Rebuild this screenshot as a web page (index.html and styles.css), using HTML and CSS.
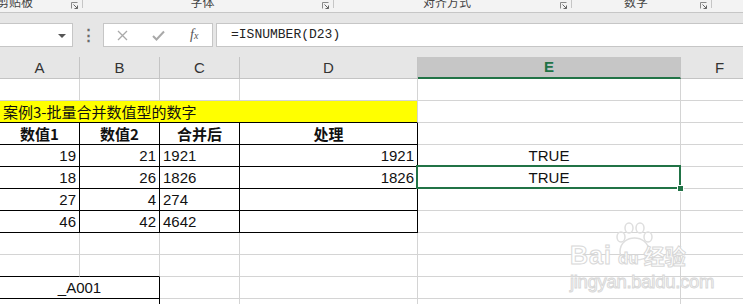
FILE: index.html
```html
<!DOCTYPE html>
<html lang="zh-CN">
<head>
  <meta charset="UTF-8">
  <title>案例3-批量合并数值型的数字</title>
  <link rel="stylesheet" href="styles.css">
</head>
<body>
  <div class="ribbon">
    <div class="group g1">
      <span class="label first">剪贴板</span>
      <svg class="launch" width="7" height="7" viewBox="0 0 7 7"><path d="M0.5 6.5V0.5H6.5" fill="none" stroke="#8a8a8a"/><path d="M2.5 2.5L6.5 6.5M6.5 3.5V6.5H3.5" fill="none" stroke="#666"/></svg>
      <span class="sep"></span>
    </div>
    <div class="group g2">
      <span class="label">字体</span>
      <svg class="launch" width="7" height="7" viewBox="0 0 7 7"><path d="M0.5 6.5V0.5H6.5" fill="none" stroke="#8a8a8a"/><path d="M2.5 2.5L6.5 6.5M6.5 3.5V6.5H3.5" fill="none" stroke="#666"/></svg>
      <span class="sep"></span>
    </div>
    <div class="group g3">
      <span class="label">对齐方式</span>
      <svg class="launch" width="7" height="7" viewBox="0 0 7 7"><path d="M0.5 6.5V0.5H6.5" fill="none" stroke="#8a8a8a"/><path d="M2.5 2.5L6.5 6.5M6.5 3.5V6.5H3.5" fill="none" stroke="#666"/></svg>
      <span class="sep"></span>
    </div>
    <div class="group g4">
      <span class="label">数字</span>
      <svg class="launch" width="7" height="7" viewBox="0 0 7 7"><path d="M0.5 6.5V0.5H6.5" fill="none" stroke="#8a8a8a"/><path d="M2.5 2.5L6.5 6.5M6.5 3.5V6.5H3.5" fill="none" stroke="#666"/></svg>
      <span class="sep"></span>
    </div>
  </div>

  <div class="formula-area">
    <div class="namebox"><span class="arrow"></span></div>
    <div class="dots">⋮</div>
    <div class="buttons">
      <span class="btn">
        <svg width="11" height="11" viewBox="0 0 11 11"><path d="M1 1L10 10M10 1L1 10" stroke="#a9a9a9" stroke-width="1.3"/></svg>
      </span>
      <span class="btn">
        <svg width="13" height="11" viewBox="0 0 13 11"><path d="M1 6L4.5 9.5L12 1.5" fill="none" stroke="#a9a9a9" stroke-width="2"/></svg>
      </span>
      <span class="btn fx">f<small>x</small></span>
    </div>
    <div class="formula">=ISNUMBER(D23)</div>
  </div>

  <table class="sheet">
    <colgroup>
      <col class="w-a"><col class="w-b"><col class="w-c"><col class="w-d"><col class="w-e"><col class="w-f">
    </colgroup>
    <tr class="heads">
      <td>A</td><td>B</td><td>C</td><td>D</td><td class="active">E</td><td>F</td>
    </tr>
    <tr>
      <td></td><td></td><td></td><td></td><td></td><td></td>
    </tr>
    <tr>
      <td class="title" colspan="4">案例3-批量合并数值型的数字</td><td></td><td></td>
    </tr>
    <tr class="boxed th">
      <td>数值1</td><td>数值2</td><td>合并后</td><td>处理</td><td></td><td></td>
    </tr>
    <tr class="boxed">
      <td class="num">19</td><td class="num">21</td><td>1921</td><td class="num">1921</td><td class="mid">TRUE</td><td></td>
    </tr>
    <tr class="boxed">
      <td class="num">18</td><td class="num">26</td><td>1826</td><td class="num">1826</td><td class="mid selected">TRUE</td><td></td>
    </tr>
    <tr class="boxed">
      <td class="num">27</td><td class="num">4</td><td>274</td><td></td><td></td><td></td>
    </tr>
    <tr class="boxed">
      <td class="num">46</td><td class="num">42</td><td>4642</td><td></td><td></td><td></td>
    </tr>
    <tr>
      <td></td><td></td><td></td><td></td><td></td><td></td>
    </tr>
    <tr>
      <td class="cap"></td><td class="cap"></td><td></td><td></td><td></td><td></td>
    </tr>
    <tr>
      <td class="code" colspan="2">_A001</td><td></td><td></td><td></td><td></td>
    </tr>
    <tr>
      <td class="code" colspan="2">_A002</td><td></td><td></td><td></td><td></td>
    </tr>
  </table>

  <div class="watermark">
    <svg class="paw" width="40" height="40" viewBox="0 0 40 40">
      <g fill="none" stroke="#dedede" stroke-width="1.5">
        <ellipse cx="6" cy="15" rx="4" ry="5"/>
        <ellipse cx="14" cy="6" rx="4" ry="5"/>
        <ellipse cx="25" cy="6" rx="4" ry="5"/>
        <ellipse cx="33" cy="15" rx="4" ry="5"/>
        <path d="M5 30C5 20 13 16 19.5 16C26 16 34 20 34 30C34 36 28 38 19.5 38C11 38 5 36 5 30Z"/>
      </g>
    </svg>
    <div class="wm-logo"><span class="bai">Bai</span><span class="du">du</span><span class="jy">经验</span></div>
    <div class="wm-url">jingyan.baidu.com</div>
  </div>
</body>
</html>
```

FILE: styles.css
```css
body {
  margin: 0;
  width: 743px;
  height: 304px;
  overflow: hidden;
  position: relative;
  background: #fff;
  font-family: "Liberation Sans", "Noto Sans CJK SC", sans-serif;
}
.ribbon {
  display: flex;
  height: 12px;
  background: #f3f3f3;
  border-bottom: 1px solid #c6c6c6;
  overflow: hidden;
}
.group {
  display: flex;
  align-items: flex-start;
  flex: none;
}
.g1 { width: 83px; }
.g2 { width: 251px; }
.g3 { width: 238px; }
.g4 { width: 140px; }
.label {
  flex: 1;
  text-align: center;
  font-family: "Noto Sans CJK SC", sans-serif;
  font-size: 12px;
  line-height: 12px;
  margin-top: -4px;
  color: #444;
}
.label.first {
  text-align: left;
  margin-left: -3px;
}
.launch {
  margin-top: 2px;
  margin-right: 4px;
}
.sep {
  width: 1px;
  height: 8px;
  background: #c6c6c6;
}
.formula-area {
  display: flex;
  height: 24px;
  padding: 10px 0;
  background: #e6e6e6;
}
.namebox {
  position: relative;
  width: 73px;
  box-sizing: border-box;
  background: #fff;
  border: 1px solid #c6c6c6;
  border-left: none;
}
.arrow {
  position: absolute;
  right: 6px;
  top: 10px;
  border-left: 4px solid transparent;
  border-right: 4px solid transparent;
  border-top: 4px solid #555;
}
.dots {
  width: 30px;
  text-align: center;
  color: #6a6a6a;
  font-size: 15px;
  line-height: 24px;
  font-weight: bold;
}
.buttons {
  display: flex;
  width: 110px;
  box-sizing: border-box;
  background: #fff;
  border: 1px solid #c6c6c6;
  padding-left: 1px;
}
.btn {
  width: 36px;
  display: flex;
  align-items: center;
  justify-content: center;
}
.fx {
  font-family: "Liberation Serif", serif;
  font-style: italic;
  font-size: 14px;
  color: #555;
}
.fx small {
  font-size: 10px;
}
.formula {
  flex: 1;
  margin-left: 3px;
  margin-right: -1px;
  box-sizing: border-box;
  background: #fff;
  border: 1px solid #c6c6c6;
  padding-left: 14px;
  font-family: "Liberation Mono", monospace;
  font-size: 13px;
  line-height: 22px;
  color: #222;
}
.sheet {
  table-layout: fixed;
  width: 759px;
  border-collapse: separate;
  border-spacing: 0;
  font-size: 15px;
  color: #111;
}
.w-a, .w-b, .w-c { width: 80px; }
.w-d { width: 178px; }
.w-e { width: 263px; }
.w-f { width: 78px; }
.sheet td {
  box-sizing: border-box;
  height: 22px;
  padding: 0 3px;
  line-height: 21px;
  white-space: nowrap;
  overflow: hidden;
  border-right: 1px solid #d4d4d4;
  border-bottom: 1px solid #d4d4d4;
}
.heads td {
  background: #e6e6e6;
  text-align: center;
  color: #333;
  border-right-color: #c4c4c4;
  border-bottom-color: #c4c4c4;
}
.heads td.active {
  background: #c6c6c6;
  color: #217346;
  font-weight: bold;
  border-bottom: 2px solid #217346;
  line-height: 20px;
}
.title {
  background: #ffff00;
  font-family: "Noto Sans CJK SC", sans-serif;
  line-height: 21px;
  border-bottom-color: #000 !important;
}
.boxed td:nth-child(-n+4) {
  border-right-color: #000;
  border-bottom-color: #000;
}
.th td {
  font-weight: bold;
  text-align: center;
  font-family: "Noto Sans CJK SC", "Liberation Sans", sans-serif;
  line-height: 20px;
}
.num {
  text-align: right;
}
.mid {
  text-align: center;
}
.selected {
  position: relative;
  overflow: visible !important;
}
.selected::after {
  content: "";
  position: absolute;
  top: -2px;
  left: -2px;
  right: -1px;
  bottom: -1px;
  border: 2px solid #217346;
}
.selected::before {
  content: "";
  position: absolute;
  right: -4px;
  bottom: -4px;
  width: 5px;
  height: 5px;
  background: #217346;
  border: 1px solid #fff;
  z-index: 1;
}
.cap {
  border-bottom-color: #000 !important;
}
.code {
  text-align: center;
  border-right-color: #000 !important;
  border-bottom-color: #000 !important;
}
.watermark {
  position: absolute;
  left: 570px;
  top: 220px;
  width: 132px;
  pointer-events: none;
}
.paw {
  position: absolute;
  left: 45px;
  top: 2px;
}
.wm-logo {
  position: relative;
  margin-top: 23px;
  display: flex;
  align-items: baseline;
  font-family: "Liberation Sans", sans-serif;
  font-weight: bold;
  line-height: 24px;
  color: #fff;
  -webkit-text-stroke: 1px #d8d8d8;
}
.wm-logo .bai {
  font-size: 25px;
  letter-spacing: 1px;
}
.wm-logo .du {
  font-size: 17px;
  margin-left: 6px;
}
.wm-logo .jy {
  font-family: "Noto Sans CJK SC", sans-serif;
  font-size: 21px;
  margin-left: 5px;
}
.wm-url {
  font-family: "Liberation Sans", sans-serif;
  font-size: 18.5px;
  line-height: 22px;
  color: #fff;
  -webkit-text-stroke: 1px #d8d8d8;
  letter-spacing: -0.3px;
}
```
